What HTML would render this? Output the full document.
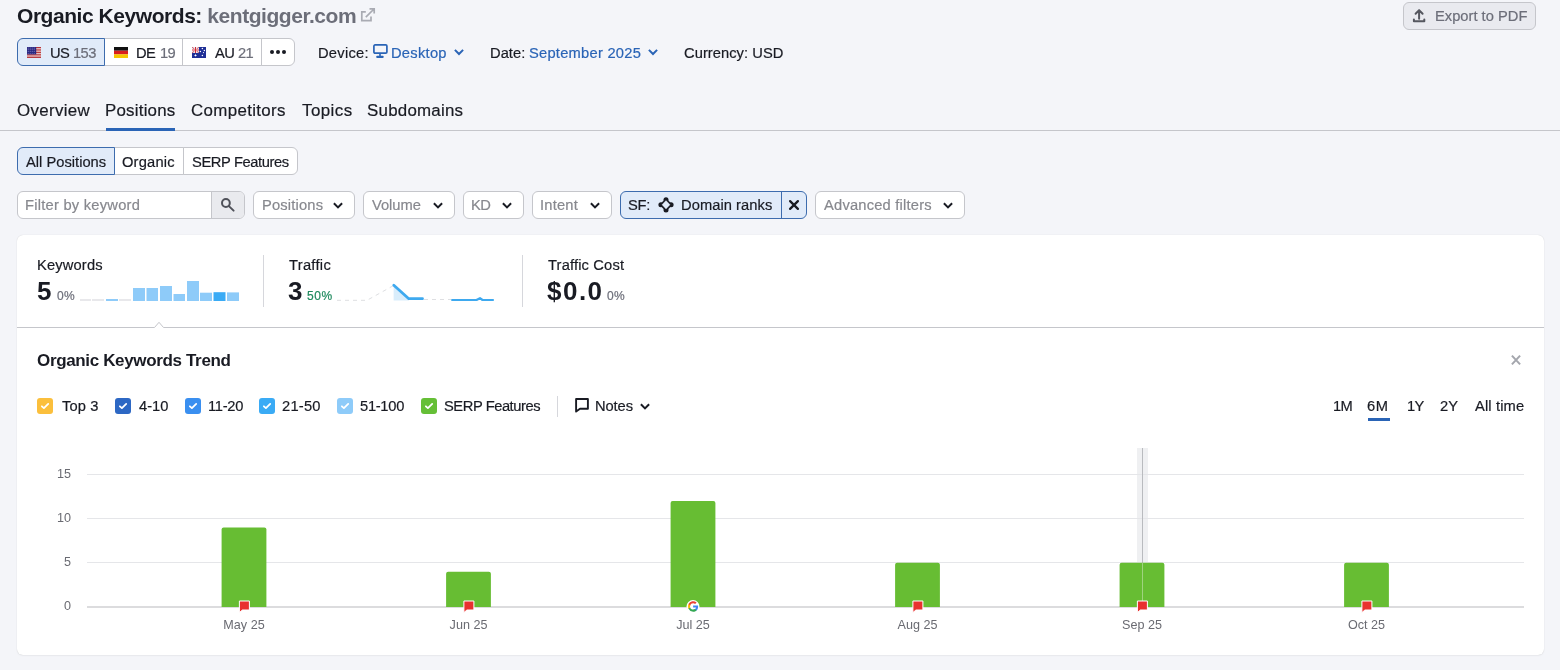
<!DOCTYPE html>
<html><head><meta charset="utf-8">
<style>
*{box-sizing:border-box;margin:0;padding:0}
html,body{width:1560px;height:670px;overflow:hidden;background:#f4f5f9;font-family:"Liberation Sans",sans-serif;color:#191b23}
.abs{position:absolute}
.t{position:absolute;white-space:nowrap;line-height:1;z-index:5;will-change:transform}
.seg{position:absolute;height:28px;border:1px solid #c5c6cb;background:#fff}
.dd{position:absolute;top:191px;height:28px;border:1px solid #c5c6cb;border-radius:6px;background:#fff}
.ph{color:#87888e;font-size:14px}
.chev{position:absolute}
</style></head><body>

<!-- Title -->
<svg class="abs" style="left:360px;top:7px" width="16" height="16" viewBox="0 0 16 16" fill="none" stroke="#a9abb3" stroke-width="1.7"><path d="M5.8 4.9H1.8V13.7H11V9.6"/><path d="M5.8 10.2L14 2M9.5 1.9H14.2V6.6"/></svg>

<!-- Export -->
<div class="abs" style="left:1403px;top:2px;width:133px;height:28px;border:1px solid #c5c6cb;border-radius:6px;background:#e9eaef"></div>
<svg class="abs" style="left:1411px;top:8px" width="16" height="16" viewBox="0 0 16 16" fill="none" stroke="#55575f" stroke-width="2" stroke-linecap="round" stroke-linejoin="round"><path d="M8.1 2.3V10.8M4.6 5.7L8.1 2.1L11.6 5.7"/><path d="M2.9 11.5V13.2H13.3V11.5"/></svg>

<!-- Country group -->
<div class="seg" style="left:17px;top:38px;width:88px;border-radius:6px 0 0 6px;background:#e1ebf9;border-color:#3d6cae;z-index:2"></div>
<div class="seg" style="left:104px;top:38px;width:79px;border-left:none"></div>
<div class="seg" style="left:182px;top:38px;width:80px"></div>
<div class="seg" style="left:261px;top:38px;width:34px;border-radius:0 6px 6px 0"></div>
<!-- flags -->
<svg class="abs" style="left:27px;top:47px;z-index:3" width="14" height="11" viewBox="0 0 14 11"><rect width="14" height="11" fill="#f6f1ef"/><g fill="#b3282d"><rect y="0" width="14" height="0.95"/><rect y="1.7" width="14" height="0.95"/><rect y="3.4" width="14" height="0.95"/><rect y="5.1" width="14" height="0.95"/><rect y="6.8" width="14" height="0.95"/><rect y="8.5" width="14" height="0.95"/><rect y="10.1" width="14" height="0.95"/></g><rect width="9.2" height="7.4" fill="#2a2880"/><g fill="#b9b4f0"><circle cx="1.15" cy="0.95" r="0.45"/><circle cx="3.15" cy="0.95" r="0.45"/><circle cx="5.15" cy="0.95" r="0.45"/><circle cx="7.15" cy="0.95" r="0.45"/><circle cx="1.15" cy="2.75" r="0.45"/><circle cx="3.15" cy="2.75" r="0.45"/><circle cx="5.15" cy="2.75" r="0.45"/><circle cx="7.15" cy="2.75" r="0.45"/><circle cx="1.15" cy="4.55" r="0.45"/><circle cx="3.15" cy="4.55" r="0.45"/><circle cx="5.15" cy="4.55" r="0.45"/><circle cx="7.15" cy="4.55" r="0.45"/><circle cx="1.15" cy="6.35" r="0.45"/><circle cx="3.15" cy="6.35" r="0.45"/><circle cx="5.15" cy="6.35" r="0.45"/><circle cx="7.15" cy="6.35" r="0.45"/></g></svg>
<svg class="abs" style="left:114px;top:47px" width="14" height="11" viewBox="0 0 14 11"><rect width="14" height="3.7" fill="#111"/><rect y="3.7" width="14" height="3.7" fill="#d81e1e"/><rect y="7.3" width="14" height="3.7" fill="#f6c500"/></svg>
<svg class="abs" style="left:192px;top:47px" width="14" height="11" viewBox="0 0 14 11"><rect width="14" height="11" fill="#1f2f96"/><rect width="7" height="6" fill="#e9dde6"/><path d="M0 0L7 6M7 0L0 6" stroke="#c9555f" stroke-width="0.9"/><path d="M0 3H7M3.5 0V6" stroke="#fff" stroke-width="1.8"/><path d="M0 3H7M3.5 0V6" stroke="#cf2b36" stroke-width="1"/><g fill="#fff"><circle cx="10.4" cy="1.6" r="0.75"/><circle cx="12.4" cy="3.6" r="0.75"/><circle cx="8.4" cy="4.6" r="0.75"/><circle cx="11.5" cy="5.6" r="0.6"/><circle cx="10.4" cy="8.5" r="0.75"/><path d="M3.5 6.9L4.1 7.9L5.2 8.3L4.1 8.7L3.5 9.8L2.9 8.7L1.8 8.3L2.9 7.9Z"/></g></svg>
<div class="abs" style="left:270px;top:50px;width:4px;height:4px;border-radius:50%;background:#191b23"></div>
<div class="abs" style="left:276px;top:50px;width:4px;height:4px;border-radius:50%;background:#191b23"></div>
<div class="abs" style="left:282px;top:50px;width:4px;height:4px;border-radius:50%;background:#191b23"></div>

<!-- Device / Date / Currency -->
<svg class="abs" style="left:372px;top:43px" width="16" height="16" viewBox="0 0 16 16"><rect x="1.9" y="1.9" width="13" height="8.3" rx="1.2" fill="none" stroke="#2a64b6" stroke-width="1.7"/><rect x="4.2" y="12.7" width="7.5" height="2.3" rx="1" fill="#2a64b6"/><rect x="7.2" y="10.5" width="1.6" height="3" fill="#2a64b6"/></svg>
<svg class="abs" style="left:453px;top:46px" width="12" height="12" viewBox="0 0 12 12" fill="none" stroke="#2a64b6" stroke-width="2"><path d="M1.9 3.9L6 8L10.1 3.9"/></svg>
<svg class="abs" style="left:646.7px;top:46px" width="12" height="12" viewBox="0 0 12 12" fill="none" stroke="#2a64b6" stroke-width="2"><path d="M1.9 3.9L6 8L10.1 3.9"/></svg>

<!-- Tabs -->
<div class="abs" style="left:0;top:130px;width:1560px;height:1px;background:#c5c6cb"></div>
<div class="abs" style="left:106px;top:128px;width:69px;height:3px;background:#2a64b6"></div>

<!-- Segments 2 -->
<div class="seg" style="left:17px;top:147px;width:98px;border-radius:6px 0 0 6px;background:#e1ebf9;border-color:#3d6cae;z-index:2"></div>
<div class="seg" style="left:114px;top:147px;width:70px;border-left:none"></div>
<div class="seg" style="left:183px;top:147px;width:115px;border-radius:0 6px 6px 0"></div>

<!-- Filters -->
<div class="dd" style="left:17px;width:228px"></div>
<div class="abs" style="left:211px;top:192px;width:33px;height:26px;background:#e9eaee;border-left:1px solid #c5c6cb;border-radius:0 5px 5px 0"></div>
<svg class="abs" style="left:220px;top:197px" width="16" height="16" viewBox="0 0 16 16" fill="none" stroke="#4f5159" stroke-width="2" stroke-linecap="round"><circle cx="5.9" cy="6" r="3.9"/><path d="M8.9 9.1L13.6 13.6"/></svg>

<div class="dd" style="left:253px;width:102px"></div>
<div class="dd" style="left:363px;width:92px"></div>
<div class="dd" style="left:463px;width:61px"></div>
<div class="dd" style="left:532px;width:80px"></div>
<svg class="abs" style="left:332px;top:199px" width="12" height="12" viewBox="0 0 12 12" fill="none" stroke="#191b23" stroke-width="2"><path d="M1.9 4.3L6 8.4L10.1 4.3"/></svg>
<svg class="abs" style="left:432px;top:199px" width="12" height="12" viewBox="0 0 12 12" fill="none" stroke="#191b23" stroke-width="2"><path d="M1.9 4.3L6 8.4L10.1 4.3"/></svg>
<svg class="abs" style="left:501px;top:199px" width="12" height="12" viewBox="0 0 12 12" fill="none" stroke="#191b23" stroke-width="2"><path d="M1.9 4.3L6 8.4L10.1 4.3"/></svg>
<svg class="abs" style="left:589px;top:199px" width="12" height="12" viewBox="0 0 12 12" fill="none" stroke="#191b23" stroke-width="2"><path d="M1.9 4.3L6 8.4L10.1 4.3"/></svg>

<div class="dd" style="left:620px;width:187px;background:#e1ebf9;border-color:#3d6cae"></div>
<div class="abs" style="left:781px;top:192px;width:1px;height:26px;background:#3d6cae"></div>
<svg class="abs" style="left:657px;top:196px" width="18" height="18" viewBox="0 0 18 18"><g fill="#191b23"><path d="M9 2.2L15.6 8.8L9 15.4L2.4 8.8Z"/><circle cx="9" cy="3.7" r="2.5"/><circle cx="14.1" cy="8.8" r="2.5"/><circle cx="9" cy="13.9" r="2.5"/><circle cx="3.9" cy="8.8" r="2.5"/></g><path d="M9 4.6L13 8.8L9 13L5 8.8Z" fill="#e1ebf9" stroke="#e1ebf9" stroke-width="0.3" stroke-linejoin="round"/></svg>
<svg class="abs" style="left:788px;top:199px" width="12" height="12" viewBox="0 0 12 12" fill="none" stroke="#191b23" stroke-width="2.3" stroke-linecap="round"><path d="M2.1 2.1L9.9 9.9M9.9 2.1L2.1 9.9"/></svg>

<div class="dd" style="left:815px;width:150px"></div>
<svg class="abs" style="left:942px;top:199px" width="12" height="12" viewBox="0 0 12 12" fill="none" stroke="#191b23" stroke-width="2"><path d="M1.9 4.3L6 8.4L10.1 4.3"/></svg>

<!-- Card -->
<div class="abs" style="left:17px;top:235px;width:1527px;height:420px;background:#fff;border-radius:6px;box-shadow:0 0 1px rgba(0,0,0,0.18),0 1px 2px rgba(0,0,0,0.04)"></div>

<!-- summary -->
<svg class="abs" style="left:80px;top:280px" width="160" height="22" viewBox="0 0 160 22">
 <g fill="#e8e8eb"><rect x="0" y="19" width="11" height="2"/><rect x="12" y="19" width="12" height="2"/><rect x="39" y="19" width="12" height="2"/></g>
 <rect x="26" y="19" width="12" height="2" fill="#8ecbf9"/>
 <g fill="#8ecbf9"><rect x="53" y="8" width="12" height="13"/><rect x="66.5" y="8" width="11.5" height="13"/><rect x="80" y="6" width="12" height="15"/><rect x="93.5" y="14" width="11.5" height="7"/><rect x="107" y="1" width="12" height="20"/><rect x="120" y="12.7" width="12" height="8.3"/><rect x="147" y="12.4" width="12" height="8.6"/></g>
 <rect x="133.5" y="12.2" width="12" height="8.8" fill="#3aabf5"/>
</svg>
<div class="abs" style="left:263px;top:255px;width:1px;height:52px;background:#d6d7dc"></div>
<svg class="abs" style="left:330px;top:278px" width="170" height="26" viewBox="0 0 170 26">
 <path d="M7 22.3H37L63.6 7.5" fill="none" stroke="#dedfe2" stroke-width="1" stroke-dasharray="4 4"/>
 <path d="M63.6 7L79 20.7V22.5H63.6Z" fill="#d9edfb"/>
 <path d="M63.8 7.3L78.8 20.7H92.5" fill="none" stroke="#3ea9ef" stroke-width="2.8" stroke-linecap="round" stroke-linejoin="round"/>
 <path d="M94 21.5H121" fill="none" stroke="#dedfe2" stroke-width="1" stroke-dasharray="4 4"/>
 <path d="M121.3 22H146.5L150 20.2L152.5 22H163.8" fill="none" stroke="#3ea9ef" stroke-width="2.2" stroke-linejoin="round"/>
</svg>
<div class="abs" style="left:522px;top:255px;width:1px;height:52px;background:#d6d7dc"></div>
<!-- divider with notch -->
<svg class="abs" style="left:17px;top:320px" width="1527" height="9" viewBox="0 0 1527 9"><path d="M0 7.5H137.5L142 2.3L146.5 7.5H1527" fill="#fff" stroke="#c5c6cb" stroke-width="1"/></svg>

<!-- trend -->
<svg class="abs" style="left:1510px;top:354px" width="12" height="12" viewBox="0 0 12 12" fill="none" stroke="#a4a6ad" stroke-width="2"><path d="M1.9 1.6L10.1 10.4M10.1 1.6L1.9 10.4"/></svg>

<svg class="abs" style="left:37px;top:398px" width="16" height="16" viewBox="0 0 16 16"><rect width="16" height="16" rx="3" fill="#fbbf3c"/><path d="M4.9 8.3L6.9 10.1L11.2 5.9" fill="none" stroke="#fff" stroke-width="1.8" stroke-linecap="round" stroke-linejoin="round"/></svg>
<svg class="abs" style="left:115px;top:398px" width="16" height="16" viewBox="0 0 16 16"><rect width="16" height="16" rx="3" fill="#2d68c4"/><path d="M4.9 8.3L6.9 10.1L11.2 5.9" fill="none" stroke="#fff" stroke-width="1.8" stroke-linecap="round" stroke-linejoin="round"/></svg>
<svg class="abs" style="left:185px;top:398px" width="16" height="16" viewBox="0 0 16 16"><rect width="16" height="16" rx="3" fill="#3a8ff0"/><path d="M4.9 8.3L6.9 10.1L11.2 5.9" fill="none" stroke="#fff" stroke-width="1.8" stroke-linecap="round" stroke-linejoin="round"/></svg>
<svg class="abs" style="left:259px;top:398px" width="16" height="16" viewBox="0 0 16 16"><rect width="16" height="16" rx="3" fill="#3aabf5"/><path d="M4.9 8.3L6.9 10.1L11.2 5.9" fill="none" stroke="#fff" stroke-width="1.8" stroke-linecap="round" stroke-linejoin="round"/></svg>
<svg class="abs" style="left:337px;top:398px" width="16" height="16" viewBox="0 0 16 16"><rect width="16" height="16" rx="3" fill="#8ecbf9"/><path d="M4.9 8.3L6.9 10.1L11.2 5.9" fill="none" stroke="#fff" stroke-width="1.8" stroke-linecap="round" stroke-linejoin="round"/></svg>
<svg class="abs" style="left:421px;top:398px" width="16" height="16" viewBox="0 0 16 16"><rect width="16" height="16" rx="3" fill="#65bf36"/><path d="M4.9 8.3L6.9 10.1L11.2 5.9" fill="none" stroke="#fff" stroke-width="1.8" stroke-linecap="round" stroke-linejoin="round"/></svg>
<div class="abs" style="left:557px;top:396px;width:1px;height:21px;background:#d6d7dc"></div>
<svg class="abs" style="left:574px;top:397px" width="16" height="17" viewBox="0 0 16 17" fill="none" stroke="#191b23" stroke-width="1.9" stroke-linejoin="round"><path d="M2.1 2H13.9V11.7H6L2.1 14.6Z"/></svg>
<svg class="abs" style="left:638.9px;top:400px" width="12" height="12" viewBox="0 0 12 12" fill="none" stroke="#191b23" stroke-width="2"><path d="M1.9 4.3L6 8.4L10.1 4.3"/></svg>
<div class="abs" style="left:1368px;top:418px;width:22px;height:3px;background:#2a64b6"></div>
<svg class="abs" style="left:0;top:440px;will-change:transform" width="1560" height="200" viewBox="0 440 1560 200">
<rect x="1137" y="448" width="11" height="159" fill="#eff0f2"/>
<rect x="87" y="474" width="1437" height="1" fill="#e5e6e9"/>
<rect x="87" y="518" width="1437" height="1" fill="#e5e6e9"/>
<rect x="87" y="562" width="1437" height="1" fill="#e5e6e9"/>
<rect x="87" y="606" width="1437" height="2" fill="#dcdcde"/>
<rect x="1142" y="448" width="1" height="159" fill="#b9bbbf"/>
<path d="M221.6 607V529.53Q221.6 527.53 223.6 527.53H264.4Q266.4 527.53 266.4 529.53V607Z" fill="#67bd33"/>
<path d="M446.1 607V573.68Q446.1 571.68 448.1 571.68H488.9Q490.9 571.68 490.9 573.68V607Z" fill="#67bd33"/>
<path d="M670.6 607V503.04Q670.6 501.04 672.6 501.04H713.4Q715.4 501.04 715.4 503.04V607Z" fill="#67bd33"/>
<path d="M895.1 607V564.85Q895.1 562.85 897.1 562.85H937.9Q939.9 562.85 939.9 564.85V607Z" fill="#67bd33"/>
<path d="M1119.6 607V564.85Q1119.6 562.85 1121.6 562.85H1162.4Q1164.4 562.85 1164.4 564.85V607Z" fill="#67bd33"/>
<path d="M1344.1 607V564.85Q1344.1 562.85 1346.1 562.85H1386.9Q1388.9 562.85 1388.9 564.85V607Z" fill="#67bd33"/>
<rect x="1142" y="562.9" width="1" height="44.1" fill="#9fd37f"/>
<path d="M239.4 601H249.4V610H242.4L239.4 612.6Z" fill="#e8312f" stroke="#fff" stroke-width="1" stroke-linejoin="round"/>
<path d="M463.9 601H473.9V610H466.9L463.9 612.6Z" fill="#e8312f" stroke="#fff" stroke-width="1" stroke-linejoin="round"/>
<g transform="translate(686.5,600)"><circle cx="6.5" cy="6.5" r="6.5" fill="#fff"/><path d="M11.6 6.6c0-.4 0-.8-.1-1.1H6.6v2.1h2.9a2.5 2.5 0 01-1.1 1.6v1.3h1.7c1-.9 1.5-2.2 1.5-3.9z" fill="#4285f4"/><path d="M6.6 11.7c1.4 0 2.6-.5 3.5-1.3L8.4 9.1c-.5.3-1.1.5-1.8.5-1.4 0-2.5-.9-2.9-2.2H2v1.4a5.2 5.2 0 004.6 2.900z" fill="#34a853"/><path d="M3.7 7.4a3.100 3.100 0 010-2V4H2a5.200 5.200 0 000 4.700z" fill="#fbbc05"/><path d="M6.6 3.300c.8 0 1.500.3 2 .8l1.500-1.500A5.200 5.200 0 002 4l1.700 1.400c.4-1.300 1.600-2.100 2.900-2.100z" fill="#ea4335"/></g>
<path d="M912.9 601H922.9V610H915.9L912.9 612.6Z" fill="#e8312f" stroke="#fff" stroke-width="1" stroke-linejoin="round"/>
<path d="M1137.4 601H1147.4V610H1140.4L1137.4 612.6Z" fill="#e8312f" stroke="#fff" stroke-width="1" stroke-linejoin="round"/>
<path d="M1361.9 601H1371.9V610H1364.9L1361.9 612.6Z" fill="#e8312f" stroke="#fff" stroke-width="1" stroke-linejoin="round"/>
<text x="71" y="477.9" text-anchor="end" font-family="Liberation Sans" font-size="12.6" fill="#6a6b72">15</text>
<text x="71" y="521.9" text-anchor="end" font-family="Liberation Sans" font-size="12.6" fill="#6a6b72">10</text>
<text x="71" y="565.9" text-anchor="end" font-family="Liberation Sans" font-size="12.6" fill="#6a6b72">5</text>
<text x="71" y="610.4" text-anchor="end" font-family="Liberation Sans" font-size="12.6" fill="#6a6b72">0</text>
<text x="244.0" y="629" text-anchor="middle" font-family="Liberation Sans" font-size="12.6" fill="#6a6b72">May 25</text>
<text x="468.5" y="629" text-anchor="middle" font-family="Liberation Sans" font-size="12.6" fill="#6a6b72">Jun 25</text>
<text x="693.0" y="629" text-anchor="middle" font-family="Liberation Sans" font-size="12.6" fill="#6a6b72">Jul 25</text>
<text x="917.5" y="629" text-anchor="middle" font-family="Liberation Sans" font-size="12.6" fill="#6a6b72">Aug 25</text>
<text x="1142.0" y="629" text-anchor="middle" font-family="Liberation Sans" font-size="12.6" fill="#6a6b72">Sep 25</text>
<text x="1366.5" y="629" text-anchor="middle" font-family="Liberation Sans" font-size="12.6" fill="#6a6b72">Oct 25</text>
</svg>
<div id="title" class="t" style="left:16.72px;top:5.15px;font-size:21px;font-weight:700;color:#191b23;letter-spacing:-0.450px">Organic Keywords: <span style="color:#6c6e79">kentgigger.com</span></div>
<div id="us" class="t" style="left:49.62px;top:45.51px;font-size:14.7px;font-weight:400;color:#191b23;letter-spacing:-0.600px;-webkit-text-stroke:0.2px currentColor">US</div>
<div id="usn" class="t" style="left:72.82px;top:45.51px;font-size:14.7px;font-weight:400;color:#6c6e79;letter-spacing:-0.600px;-webkit-text-stroke:0.2px currentColor">153</div>
<div id="de" class="t" style="left:136.42px;top:45.51px;font-size:14.7px;font-weight:400;color:#191b23;letter-spacing:-0.600px;-webkit-text-stroke:0.2px currentColor">DE</div>
<div id="den" class="t" style="left:159.72px;top:45.51px;font-size:14.7px;font-weight:400;color:#6c6e79;letter-spacing:-0.600px;-webkit-text-stroke:0.2px currentColor">19</div>
<div id="au" class="t" style="left:215.12px;top:45.51px;font-size:14.7px;font-weight:400;color:#191b23;letter-spacing:-0.600px;-webkit-text-stroke:0.2px currentColor">AU</div>
<div id="aun" class="t" style="left:238.32px;top:45.51px;font-size:14.7px;font-weight:400;color:#6c6e79;letter-spacing:-0.600px;-webkit-text-stroke:0.2px currentColor">21</div>
<div id="device" class="t" style="left:318.28px;top:45.51px;font-size:14.7px;font-weight:400;color:#191b23;letter-spacing:0.266px;-webkit-text-stroke:0.2px currentColor">Device:</div>
<div id="desktop" class="t" style="left:391.36px;top:45.51px;font-size:14.7px;font-weight:400;color:#2a64b6;letter-spacing:0.267px;-webkit-text-stroke:0.2px currentColor">Desktop</div>
<div id="date" class="t" style="left:490.36px;top:45.51px;font-size:14.7px;font-weight:400;color:#191b23;letter-spacing:0.040px;-webkit-text-stroke:0.2px currentColor">Date:</div>
<div id="sept" class="t" style="left:528.82px;top:45.51px;font-size:14.7px;font-weight:400;color:#2a64b6;letter-spacing:0.247px;-webkit-text-stroke:0.2px currentColor">September 2025</div>
<div id="currency" class="t" style="left:683.82px;top:45.51px;font-size:14.7px;font-weight:400;color:#191b23;letter-spacing:0.055px;-webkit-text-stroke:0.2px currentColor">Currency: USD</div>
<div id="export" class="t" style="left:1434.70px;top:9.41px;font-size:14.7px;font-weight:400;color:#6c6e79;letter-spacing:0.012px;-webkit-text-stroke:0.2px currentColor">Export to PDF</div>
<div id="overview" class="t" style="left:16.99px;top:102.54px;font-size:16.9px;font-weight:400;color:#191b23;letter-spacing:0.322px;-webkit-text-stroke:0.2px currentColor">Overview</div>
<div id="positions" class="t" style="left:105.49px;top:102.54px;font-size:16.9px;font-weight:400;color:#191b23;letter-spacing:0.220px;-webkit-text-stroke:0.2px currentColor">Positions</div>
<div id="competitors" class="t" style="left:191.11px;top:102.54px;font-size:16.9px;font-weight:400;color:#191b23;letter-spacing:0.336px;-webkit-text-stroke:0.2px currentColor">Competitors</div>
<div id="topics" class="t" style="left:302.37px;top:102.54px;font-size:16.9px;font-weight:400;color:#191b23;letter-spacing:0.448px;-webkit-text-stroke:0.2px currentColor">Topics</div>
<div id="subdomains" class="t" style="left:367.11px;top:102.54px;font-size:16.9px;font-weight:400;color:#191b23;letter-spacing:0.236px;-webkit-text-stroke:0.2px currentColor">Subdomains</div>
<div id="allpos" class="t" style="left:26.08px;top:154.50px;font-size:14.7px;font-weight:400;color:#191b23;letter-spacing:0.012px;-webkit-text-stroke:0.2px currentColor">All Positions</div>
<div id="organic" class="t" style="left:122.36px;top:154.50px;font-size:14.7px;font-weight:400;color:#191b23;letter-spacing:0.185px;-webkit-text-stroke:0.2px currentColor">Organic</div>
<div id="serpf" class="t" style="left:191.70px;top:154.50px;font-size:14.7px;font-weight:400;color:#191b23;letter-spacing:-0.385px;-webkit-text-stroke:0.2px currentColor">SERP Features</div>
<div id="filter" class="t" style="left:25.28px;top:197.50px;font-size:14.7px;font-weight:400;color:#87888e;letter-spacing:0.240px;-webkit-text-stroke:0.2px currentColor">Filter by keyword</div>
<div id="ddpos" class="t" style="left:261.70px;top:197.50px;font-size:14.7px;font-weight:400;color:#87888e;letter-spacing:0.180px;-webkit-text-stroke:0.2px currentColor">Positions</div>
<div id="ddvol" class="t" style="left:372.08px;top:197.50px;font-size:14.7px;font-weight:400;color:#87888e;letter-spacing:-0.032px;-webkit-text-stroke:0.2px currentColor">Volume</div>
<div id="ddkd" class="t" style="left:471.20px;top:197.50px;font-size:14.7px;font-weight:400;color:#87888e;letter-spacing:-0.600px;-webkit-text-stroke:0.2px currentColor">KD</div>
<div id="ddint" class="t" style="left:540.28px;top:197.50px;font-size:14.7px;font-weight:400;color:#87888e;letter-spacing:0.192px;-webkit-text-stroke:0.2px currentColor">Intent</div>
<div id="sf" class="t" style="left:627.82px;top:197.50px;font-size:14.7px;font-weight:400;color:#191b23;letter-spacing:-0.240px;-webkit-text-stroke:0.2px currentColor">SF:</div>
<div id="domranks" class="t" style="left:681.28px;top:197.50px;font-size:14.7px;font-weight:400;color:#191b23;letter-spacing:0.057px;-webkit-text-stroke:0.2px currentColor">Domain ranks</div>
<div id="advf" class="t" style="left:824.46px;top:197.50px;font-size:14.7px;font-weight:400;color:#87888e;letter-spacing:0.206px;-webkit-text-stroke:0.2px currentColor">Advanced filters</div>
<div id="kwl" class="t" style="left:36.70px;top:257.50px;font-size:14.7px;font-weight:400;color:#191b23;letter-spacing:0.157px;-webkit-text-stroke:0.2px currentColor">Keywords</div>
<div id="kwv" class="t" style="left:36.64px;top:277.90px;font-size:26px;font-weight:700;color:#191b23;letter-spacing:0.600px">5</div>
<div id="kwp" class="t" style="left:56.72px;top:289.80px;font-size:12px;font-weight:400;color:#6c6e79;letter-spacing:0.440px;-webkit-text-stroke:0.2px currentColor">0%</div>
<div id="trl" class="t" style="left:288.62px;top:257.50px;font-size:14.7px;font-weight:400;color:#191b23;letter-spacing:0.295px;-webkit-text-stroke:0.2px currentColor">Traffic</div>
<div id="trv" class="t" style="left:287.72px;top:277.90px;font-size:26px;font-weight:700;color:#191b23;letter-spacing:0.600px">3</div>
<div id="trp" class="t" style="left:306.62px;top:289.80px;font-size:12px;font-weight:400;color:#1f8a5e;letter-spacing:0.600px;-webkit-text-stroke:0.2px currentColor">50%</div>
<div id="tcl" class="t" style="left:548.04px;top:257.50px;font-size:14.7px;font-weight:400;color:#191b23;letter-spacing:0.155px;-webkit-text-stroke:0.2px currentColor">Traffic Cost</div>
<div id="tcv" class="t" style="left:546.72px;top:277.90px;font-size:26px;font-weight:700;color:#191b23;letter-spacing:1.492px">$0.0</div>
<div id="tcp" class="t" style="left:606.76px;top:289.80px;font-size:12px;font-weight:400;color:#6c6e79;letter-spacing:0.280px;-webkit-text-stroke:0.2px currentColor">0%</div>
<div id="trend" class="t" style="left:36.98px;top:351.55px;font-size:17px;font-weight:700;color:#191b23;letter-spacing:-0.348px">Organic Keywords Trend</div>
<div id="lg1" class="t" style="left:61.58px;top:398.50px;font-size:14.7px;font-weight:400;color:#191b23;letter-spacing:0.120px;-webkit-text-stroke:0.2px currentColor">Top 3</div>
<div id="lg2" class="t" style="left:139.46px;top:398.50px;font-size:14.7px;font-weight:400;color:#191b23;letter-spacing:0.000px;-webkit-text-stroke:0.2px currentColor">4-10</div>
<div id="lg3" class="t" style="left:208.20px;top:398.50px;font-size:14.7px;font-weight:400;color:#191b23;letter-spacing:-0.280px;-webkit-text-stroke:0.2px currentColor">11-20</div>
<div id="lg4" class="t" style="left:282.36px;top:398.50px;font-size:14.7px;font-weight:400;color:#191b23;letter-spacing:0.240px;-webkit-text-stroke:0.2px currentColor">21-50</div>
<div id="lg5" class="t" style="left:359.86px;top:398.50px;font-size:14.7px;font-weight:400;color:#191b23;letter-spacing:-0.288px;-webkit-text-stroke:0.2px currentColor">51-100</div>
<div id="lg6" class="t" style="left:444.36px;top:398.50px;font-size:14.7px;font-weight:400;color:#191b23;letter-spacing:-0.437px;-webkit-text-stroke:0.2px currentColor">SERP Features</div>
<div id="notes" class="t" style="left:594.70px;top:398.50px;font-size:14.7px;font-weight:400;color:#191b23;letter-spacing:-0.080px;-webkit-text-stroke:0.2px currentColor">Notes</div>
<div id="r1m" class="t" style="left:1332.78px;top:398.50px;font-size:14.7px;font-weight:400;color:#191b23;letter-spacing:-0.600px;-webkit-text-stroke:0.2px currentColor">1M</div>
<div id="r6m" class="t" style="left:1367.32px;top:398.50px;font-size:14.7px;font-weight:400;color:#191b23;letter-spacing:0.600px;-webkit-text-stroke:0.2px currentColor">6M</div>
<div id="r1y" class="t" style="left:1406.70px;top:398.50px;font-size:14.7px;font-weight:400;color:#191b23;letter-spacing:-0.600px;-webkit-text-stroke:0.2px currentColor">1Y</div>
<div id="r2y" class="t" style="left:1439.78px;top:398.50px;font-size:14.7px;font-weight:400;color:#191b23;letter-spacing:0.200px;-webkit-text-stroke:0.2px currentColor">2Y</div>
<div id="rall" class="t" style="left:1474.54px;top:398.50px;font-size:14.7px;font-weight:400;color:#191b23;letter-spacing:0.135px;-webkit-text-stroke:0.2px currentColor">All time</div>
</body></html>
